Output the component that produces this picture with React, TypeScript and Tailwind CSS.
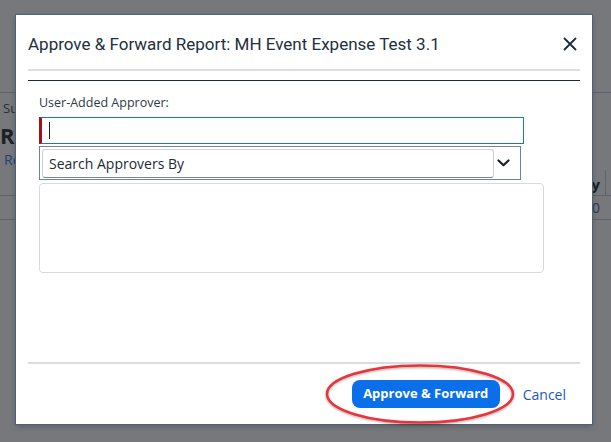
import React from "react";

function CloseIcon() {
  return (
    <svg width="14" height="14" viewBox="0 0 14 14" fill="none">
      <path d="M1.5 1.5 L12.5 12.5 M12.5 1.5 L1.5 12.5" stroke="#1c2b3c" strokeWidth="1.8" strokeLinecap="round" />
    </svg>
  );
}

function Chevron() {
  return (
    <svg width="13" height="8" viewBox="0 0 13 8" fill="none">
      <path d="M1.5 1.5 L6.5 6.2 L11.5 1.5" stroke="#15202c" strokeWidth="2.2" strokeLinecap="round" strokeLinejoin="round" />
    </svg>
  );
}

export default function App() {
  return (
    <div className="relative h-[442px] w-[611px] overflow-hidden bg-[#76787c] font-['Open_Sans',sans-serif]">
      {/* dimmed page behind the dialog */}
      <div className="pt-[92px]">
        <div className="h-px bg-[#5c6470]" />
        <div className="mt-[7px] pl-[3px] text-[13px] leading-[16px] text-[#2b2e34]">Su</div>
        <div className="mt-[6px] text-[22px] font-bold leading-[26px] text-[#1d2027]">Re</div>
        <div className="mt-[3px] pl-[4px] text-[14px] leading-[18px] text-[#243f73]">Re</div>
        <div className="flex h-[27px] justify-end border-b border-[#5c6470]">
          <div className="mt-[1px] flex items-center border-r border-[#5c6470] pr-[5px] pt-[3px] text-[15px] font-bold leading-[18px] text-[#1d2027]">
            y
          </div>
          <div className="w-[5px]" />
        </div>
        <div className="flex h-[24px] justify-end border-b border-[#5c6470] pr-[11px]">
          <div className="flex items-center text-[14px] text-[#2d3a55]">0</div>
        </div>
      </div>

      {/* dialog */}
      <div className="absolute left-[16px] top-[15px] flex h-[409px] w-[576px] flex-col bg-white px-[12px] shadow-[0_0_0_1px_#4d6178,0_2px_6px_rgba(0,0,0,0.25)]">
        <div className="flex h-[54px] items-center justify-between pt-[6px]">
          <h2 className="font-['Roboto',sans-serif] text-[17px] font-normal text-[#22303e]">
            Approve &amp; Forward Report: MH Event Expense Test 3.1
          </h2>
          <button type="button" className="mr-[3px] mt-[-2px] flex items-center">
            <CloseIcon />
          </button>
        </div>
        <div className="h-[2px] bg-[#dedede]" />
        <div className="mt-[9px] h-px bg-[#1e2b38]" />

        <div className="pl-[11px]">
          <label className="mt-[14px] block text-[12.5px] leading-[16px] text-[#2d3a47]">User-Added Approver:</label>
          <div className="mt-[6px] flex h-[27px] w-[485px] items-center border border-[#1a72e0] border-l-[3px] border-l-[#a80f0f] pl-[7px]">
            <span className="h-[17px] w-px bg-[#222]" />
          </div>
          <div className="mt-[2px] flex h-[34px] w-[482px] items-center border border-[#6f8299] p-[2px]">
            <div className="flex h-[29px] w-[452px] items-center rounded-[3px] border border-[#cfd3d8] border-b-[#7c8794] pl-[6px] text-[14px] text-[#222b35]">
              Search Approvers By
            </div>
            <div className="flex flex-1 items-center justify-center pr-[6px]">
              <Chevron />
            </div>
          </div>
          <div className="mt-[3px] h-[90px] w-[505px] rounded-[4px] border border-[#d6dae0]" />
        </div>

        <div className="flex-1" />
        <div className="h-[2px] bg-[#dcdcdc]" />
        <div className="flex h-[60px] items-center justify-end">
          <button
            type="button"
            className="flex h-[28px] w-[148px] items-center justify-center rounded-[8px] bg-[#0a6fe8] text-[13px] font-bold text-white"
          >
            Approve &amp; Forward
          </button>
          <span className="ml-[23px] mr-[14px] text-[14px] text-[#1f55c8]">Cancel</span>
        </div>
      </div>

      {/* red annotation ellipse */}
      <svg className="pointer-events-none absolute left-[320px] top-[358px]" width="202" height="72" viewBox="0 0 202 72">
        <defs>
          <filter id="sh" x="-10%" y="-20%" width="120%" height="140%">
            <feDropShadow dx="0" dy="1" stdDeviation="1.2" floodColor="#000" floodOpacity="0.35" />
          </filter>
        </defs>
        <ellipse cx="100" cy="36" rx="93" ry="28.5" fill="none" stroke="#e8353a" strokeWidth="2.6" filter="url(#sh)" />
      </svg>
    </div>
  );
}
